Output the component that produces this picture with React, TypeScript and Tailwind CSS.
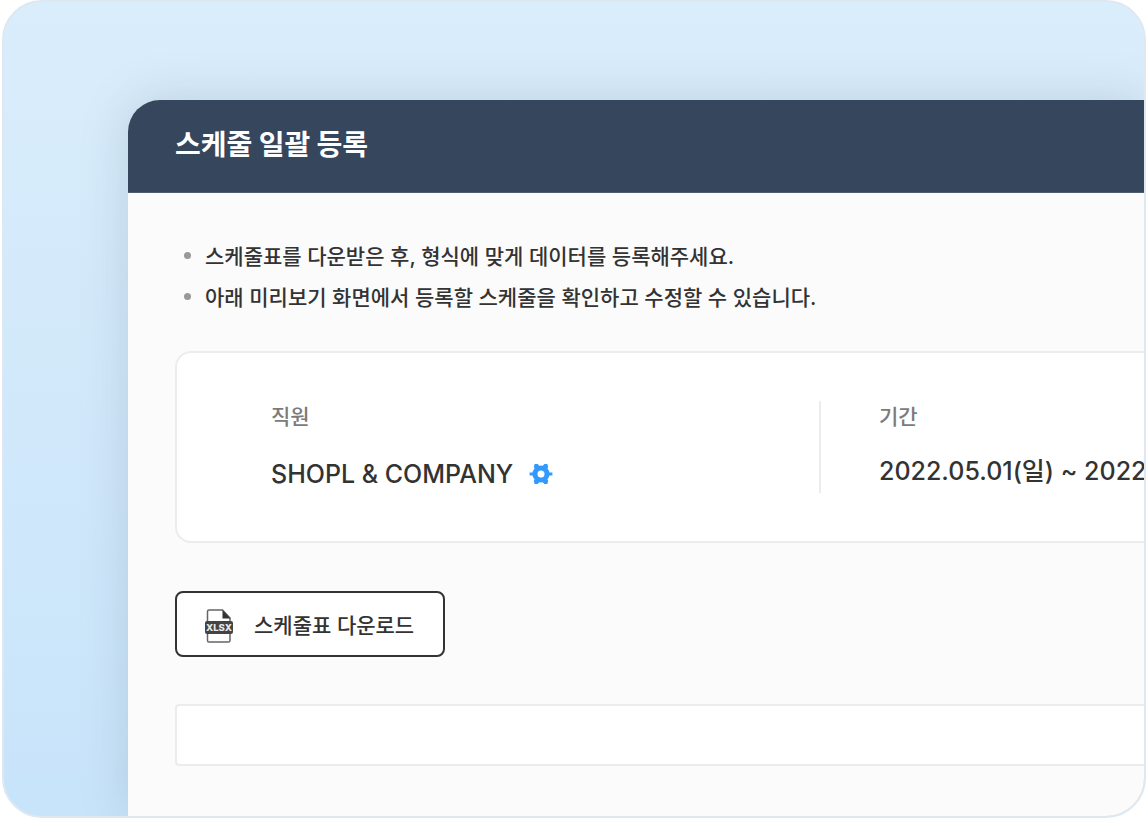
import React from "react";

const notes = [
  "스케줄표를 다운받은 후, 형식에 맞게 데이터를 등록해주세요.",
  "아래 미리보기 화면에서 등록할 스케줄을 확인하고 수정할 수 있습니다.",
];

const GearIcon = () => (
  <svg width="24" height="22" viewBox="0 0 24 22" aria-hidden="true">
    <g fill="#3299fe">
      <circle cx="12" cy="11" r="8.6" />
      <path d="M0.6 9.6h4v2.8h-4zM19.4 9.6h4v2.8h-4z" />
      <path d="M5.6 1h3l2.400 2.600-4 3.600-2.200-3zM18.400 1h-3l-2.400 2.600 4 3.600 2.200-3zM5.600 21h3l2.400-2.600-4-3.600-2.200 3zM18.400 21h-3l-2.400-2.600 4-3.600 2.200 3z" />
    </g>
    <circle cx="12" cy="11" r="3.5" fill="#fff" />
  </svg>
);

const XlsxIcon = () => (
  <svg width="30" height="34" viewBox="0 0 30 34" aria-hidden="true">
    <path d="M3.500 13V2.600Q3.500 1 5 1H18.500L26 9V31.400Q26 33 24.400 33H5Q3.500 33 3.500 31.400V24" fill="#fff" stroke="#666" strokeWidth="1.500" />
    <path d="M18.500 1l8 8.500h-8z" fill="#333" />
    <rect x="1" y="12" width="28" height="13" rx="2" fill="#444" />
    <text x="15" y="22" textAnchor="middle" fontSize="9.500" fontWeight="800" fill="#e8e8e8" fontFamily="Inter, sans-serif">
      XLSX
    </text>
  </svg>
);

export default function App() {
  return (
    <div className="h-screen bg-white px-0.5 font-['Inter','Noto_Sans_CJK_KR',sans-serif] text-[#333]">
      <main className="flex h-full flex-col overflow-hidden rounded-[40px] border-2 border-[#dfe8f0] bg-linear-to-b from-[#daedfb] to-[#c8e4fa] pt-[98px] pl-[124px]">
        <section className="flex-1 rounded-tl-[32px] bg-[#fbfbfb] shadow-[0_0_48px_rgba(90,110,130,0.22)]">
          <header className="flex h-[93px] items-center rounded-tl-[32px] border-b border-[#4d5c70] bg-[#36465d] px-[47px] pb-1.5">
            <h1 className="font-['Noto_Sans_CJK_KR',sans-serif] text-[28px] leading-10 font-bold whitespace-nowrap text-white">스케줄 일괄 등록</h1>
          </header>

          <div className="pt-[43px] pl-[47px]">
            <ul className="pl-[9px]">
              {notes.map((note) => (
                <li key={note} className="flex h-[41px] items-center gap-3.5 text-[21px] leading-10 font-medium whitespace-nowrap">
                  <span className="mb-0.5 size-[7px] shrink-0 rounded-full bg-[#999]" />
                  {note}
                </li>
              ))}
            </ul>

            <div className="mt-[33px] flex rounded-l-2xl border-2 border-r-0 border-[#ececec] bg-white py-12 pl-[94px]">
              <div className="w-[548px] shrink-0">
                <p className="text-[21px] leading-8 font-medium text-[#7b7b7b]">직원</p>
                <div className="mt-[25px] flex items-center gap-4">
                  <p className="text-[25px] leading-8 font-medium whitespace-nowrap">SHOPL &amp; COMPANY</p>
                  <button type="button" aria-label="직원 설정">
                    <GearIcon />
                  </button>
                </div>
              </div>
              <div className="h-[92px] flex-1 border-l-2 border-[#ececec] pl-[58px]">
                <p className="text-[21px] leading-8 font-medium text-[#7b7b7b]">기간</p>
                <p className="mt-5 text-[25px] leading-9 font-medium whitespace-nowrap">2022.05.01(일) ~ 2022</p>
              </div>
            </div>

            <button type="button" className="mt-12 flex h-[66px] items-center gap-5 rounded-lg border-2 border-[#333] bg-white pt-1 pr-[29px] pl-[27px]">
              <XlsxIcon />
              <span className="text-[21px] leading-8 font-medium whitespace-nowrap">스케줄표 다운로드</span>
            </button>

            <div className="mt-[47px] h-[62px] rounded-l border-2 border-r-0 border-[#ececec] bg-white" />
          </div>
        </section>
      </main>
    </div>
  );
}
